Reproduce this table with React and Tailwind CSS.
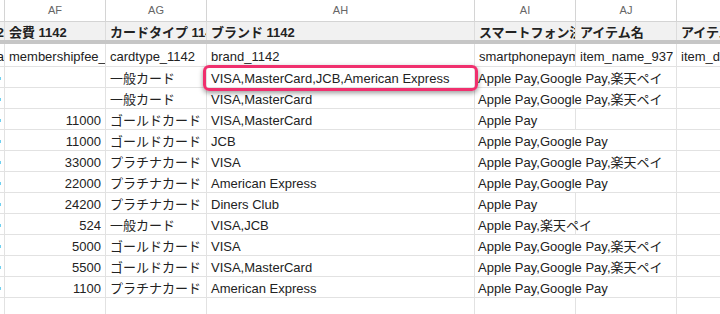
const COLS = [
  { key: 'ae', letter: '', w: 'w-[5px]' },
  { key: 'af', letter: 'AF', w: 'w-[101px]' },
  { key: 'ag', letter: 'AG', w: 'w-[101px]' },
  { key: 'ah', letter: 'AH', w: 'w-[268px]' },
  { key: 'ai', letter: 'AI', w: 'w-[101px]' },
  { key: 'aj', letter: 'AJ', w: 'w-[101px]' },
  { key: 'ak', letter: 'AK', w: 'w-[140px]' },
];

const HEADER = ['1142', '会費 1142', 'カードタイプ 1142', 'ブランド 1142', 'スマートフォン決済 1142', 'アイテム名', 'アイテム説明'];
const FIRST = ['a', 'membershipfee_1142', 'cardtype_1142', 'brand_1142', 'smartphonepayment_1142', 'item_name_937', 'item_description'];

const ROWS = [
  ['', '一般カード', 'VISA,MasterCard,JCB,American Express', 'Apple Pay,Google Pay,楽天ペイ'],
  ['', '一般カード', 'VISA,MasterCard', 'Apple Pay,Google Pay,楽天ペイ'],
  ['11000', 'ゴールドカード', 'VISA,MasterCard', 'Apple Pay'],
  ['11000', 'ゴールドカード', 'JCB', 'Apple Pay,Google Pay'],
  ['33000', 'プラチナカード', 'VISA', 'Apple Pay,Google Pay,楽天ペイ'],
  ['22000', 'プラチナカード', 'American Express', 'Apple Pay,Google Pay'],
  ['24200', 'プラチナカード', 'Diners Club', 'Apple Pay'],
  ['524', '一般カード', 'VISA,JCB', 'Apple Pay,楽天ペイ'],
  ['5000', 'ゴールドカード', 'VISA', 'Apple Pay,Google Pay,楽天ペイ'],
  ['5500', 'ゴールドカード', 'VISA,MasterCard', 'Apple Pay,Google Pay,楽天ペイ'],
  ['1100', 'プラチナカード', 'American Express', 'Apple Pay,Google Pay'],
];

const font = { fontFamily: '"Liberation Sans", Arial, "Noto Sans CJK JP", sans-serif' };

function DataRow({ cells }) {
  const [fee, type, brand, pay] = cells;
  const spills = pay.includes('Google');
  return (
    <div className="flex h-[21px] border-b border-[#e2e2e2] text-[13px] text-[#222]">
      <div className="w-[5px] shrink-0 border-r border-[#e2e2e2] overflow-hidden relative">
        <span className="absolute left-0 top-[10px] w-[1px] h-[3px] bg-[#6fd0f0]" />
      </div>
      <div className="w-[101px] shrink-0 border-r border-[#e2e2e2] flex items-center justify-end pr-[4px] pt-[4px]">{fee}</div>
      <div className="w-[101px] shrink-0 border-r border-[#e2e2e2] flex items-center pl-[4px] pt-[4px] whitespace-nowrap overflow-hidden">{type}</div>
      <div className="w-[268px] shrink-0 border-r border-[#e2e2e2] flex items-center pl-[4px] pt-[4px] whitespace-nowrap overflow-hidden">{brand}</div>
      <div className={`w-[101px] shrink-0 border-r ${spills ? 'border-transparent' : 'border-[#e2e2e2]'} flex items-center pl-[3px] pt-[4px] whitespace-nowrap relative z-10`}>{pay}</div>
      <div className="w-[101px] shrink-0 border-r border-[#e2e2e2]" />
      <div className="w-[140px] shrink-0" />
    </div>
  );
}

export default function App() {
  return (
    <div className="w-[720px] h-[314px] bg-white overflow-hidden relative" style={font}>
      <div className="w-[820px]">
        {/* column letters */}
        <div className="flex h-[22px] border-b border-[#d4d4d4] text-[11px] text-[#666]">
          {COLS.map((c) => (
            <div key={c.key} className={`${c.w} shrink-0 border-r border-[#d4d4d4] flex items-center justify-center`}>
              {c.letter}
            </div>
          ))}
        </div>

        {/* header row */}
        <div className="flex h-[22px] bg-[#f1f1f1] border-b-4 border-[#c6c6c6] text-[13px] font-bold text-[#222]">
          {COLS.map((c, i) => (
            <div
              key={c.key}
              className={`${c.w} shrink-0 border-r border-[#dcdcdc] flex items-center pt-[3px] ${i === 0 ? 'justify-end' : 'pl-[4px]'} whitespace-nowrap overflow-hidden`}
            >
              {HEADER[i]}
            </div>
          ))}
        </div>

        {/* first data row: field keys */}
        <div className="flex h-[23px] border-b border-[#e2e2e2] text-[13px] text-[#222]">
          {COLS.map((c, i) => (
            <div
              key={c.key}
              className={`${c.w} shrink-0 border-r border-[#e2e2e2] flex items-center pt-[4px] ${i === 0 ? 'justify-end' : 'pl-[4px]'} whitespace-nowrap overflow-hidden`}
            >
              {FIRST[i]}
            </div>
          ))}
        </div>

        {ROWS.map((r, i) => (
          <DataRow key={i} cells={r} />
        ))}

        {/* empty row */}
        <div className="flex h-[21px] border-b border-[#e2e2e2]">
          {COLS.map((c) => (
            <div key={c.key} className={`${c.w} shrink-0 border-r border-[#e2e2e2]`} />
          ))}
        </div>
      </div>

      {/* highlight box */}
      <div className="absolute left-[203px] top-[65px] w-[275px] h-[26px] rounded-[6px] border-[3px] border-[#f0306e] shadow-[0_2px_5px_rgba(0,0,0,0.4)] z-20" />
    </div>
  );
}
